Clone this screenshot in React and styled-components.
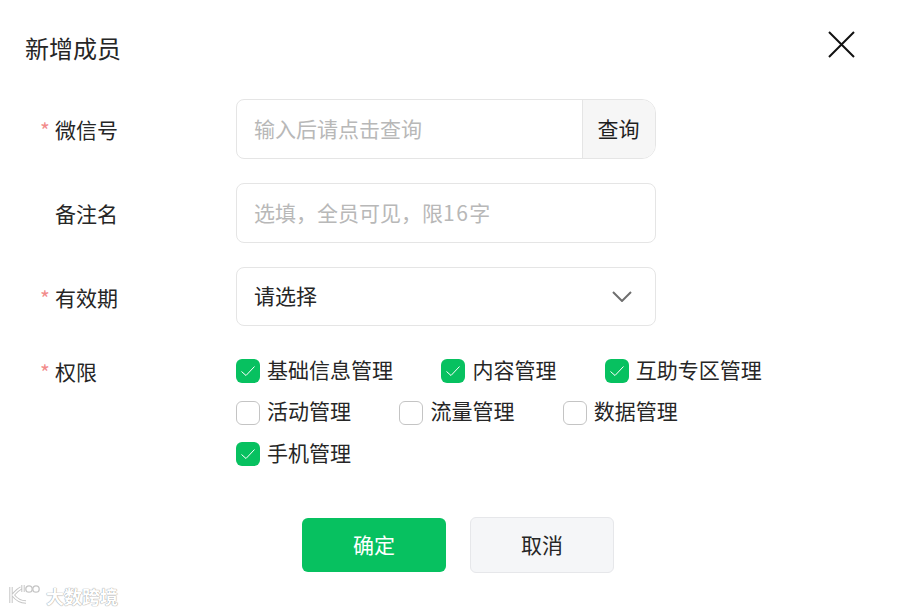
import { useState } from "react";
import styled, { createGlobalStyle } from "styled-components";

const GlobalStyle = createGlobalStyle`
  html, body {
    margin: 0;
    padding: 0;
    background: #fff;
  }
  body {
    font-family: "Noto Sans CJK SC", "Noto Sans", sans-serif;
    color: #262626;
  }
`;

const permissions = [
  [
    { name: "基础信息管理", checked: true },
    { name: "内容管理", checked: true },
    { name: "互助专区管理", checked: true },
  ],
  [
    { name: "活动管理", checked: false },
    { name: "流量管理", checked: false },
    { name: "数据管理", checked: false },
  ],
  [{ name: "手机管理", checked: true }],
];

const LOGO_STROKES = "M5 4V20M15 5C11 7 9 10 7 12C10 16 14 19 20 19M17 2V9";

function CheckItem({ name, checked }) {
  return (
    <CheckLabel>
      <CheckBox $checked={checked}>
        {checked && (
          <svg width="16" height="16" viewBox="0 0 16 16" fill="none">
            <path d="M1.5 8.5L6 12.5L14.5 3.5" stroke="#fff" strokeWidth="1" />
          </svg>
        )}
      </CheckBox>
      <CheckText>{name}</CheckText>
    </CheckLabel>
  );
}

function App() {
  const [rows] = useState(permissions);

  return (
    <Page>
      <GlobalStyle />
      <Header>
        <Title>新增成员</Title>
        <CloseIcon width="27" height="27" viewBox="0 0 27 27" fill="none">
          <path d="M1 1L26 26M26 1L1 26" stroke="#111" strokeWidth="2" />
        </CloseIcon>
      </Header>

      <Form>
        <Row>
          <Label $required>微信号</Label>
          <Field $withAddon>
            <Placeholder>输入后请点击查询</Placeholder>
            <Addon>查询</Addon>
          </Field>
        </Row>
        <Row>
          <Label>备注名</Label>
          <Field>
            <Placeholder>
              <span>
                选填，全员可见，限<Digits>16</Digits>字
              </span>
            </Placeholder>
          </Field>
        </Row>
        <Row>
          <Label $required>有效期</Label>
          <SelectField>
            <SelectText>请选择</SelectText>
            <svg width="20" height="11" viewBox="0 0 20 11" fill="none">
              <path d="M1 1L10 10L19 1" stroke="#6f6f6f" strokeWidth="2" />
            </svg>
          </SelectField>
        </Row>
        <PermRow>
          <PermLabel $required>权限</PermLabel>
          <CheckGroup>
            {rows.map((row, i) => (
              <CheckRow key={i}>
                {row.map((item) => (
                  <CheckItem key={item.name} {...item} />
                ))}
              </CheckRow>
            ))}
          </CheckGroup>
        </PermRow>
      </Form>

      <Footer>
        <PrimaryButton>确定</PrimaryButton>
        <CancelButton>取消</CancelButton>
      </Footer>

      <Watermark>
        <svg width="38" height="26" viewBox="0 0 38 26" fill="none">
          <path d={LOGO_STROKES} stroke="#c6c6c6" strokeWidth="3.4" />
          <path d={LOGO_STROKES} stroke="#fff" strokeWidth="1.4" />
          <g stroke="#c6c6c6" strokeWidth="1.3" fill="#fff">
            <circle cx="23" cy="6" r="3.2" />
            <circle cx="30" cy="6" r="3.2" />
          </g>
        </svg>
        <WatermarkText>大数跨境</WatermarkText>
      </Watermark>
    </Page>
  );
}

const Page = styled.div`
  position: relative;
  width: 900px;
  height: 613px;
  overflow: hidden;
  background: #fff;
  box-sizing: border-box;
  padding: 31px 45px 0 25px;
`;

const Header = styled.div`
  display: flex;
  justify-content: space-between;
  align-items: flex-start;
  height: 68px;
`;

const Title = styled.div`
  font-size: 24px;
  line-height: 36px;
  margin-top: -1px;
  color: #262626;
`;

const CloseIcon = styled.svg`
  display: block;
`;

const Form = styled.div`
  display: flex;
  flex-direction: column;
  gap: 24px;
`;

const Row = styled.div`
  display: flex;
  align-items: center;
`;

const PermRow = styled.div`
  display: flex;
  align-items: flex-start;
  margin-top: 9px;
`;

const Label = styled.div`
  position: relative;
  width: 211px;
  box-sizing: border-box;
  padding-left: 30px;
  font-size: 21px;
  line-height: 30px;
  color: #262626;
  ${({ $required }) =>
    $required &&
    `
    &::before {
      content: "*";
      position: absolute;
      left: 15px;
      top: 1px;
      color: #f28b8b;
      font-size: 21px;
    }
  `}
`;

const PermLabel = styled(Label)`
  margin-top: -3px;
`;

const Field = styled.div`
  display: flex;
  width: 420px;
  height: 60px;
  box-sizing: border-box;
  border: 1px solid #e5e5e5;
  border-radius: ${({ $withAddon }) => ($withAddon ? "8px 14px 14px 8px" : "8px")};
  overflow: hidden;
`;

const Placeholder = styled.div`
  flex: 1;
  display: flex;
  align-items: center;
  padding: 0 0 3px 17px;
  font-size: 21px;
  color: #b8b8b8;
`;

const Digits = styled.span`
  letter-spacing: 1.5px;
`;

const Addon = styled.div`
  display: flex;
  align-items: center;
  justify-content: center;
  box-sizing: border-box;
  width: 73px;
  padding: 0 1px 3px 0;
  border-left: 1px solid #e5e5e5;
  background: #f6f6f6;
  font-size: 21px;
  color: #1f1f1f;
`;

const SelectField = styled.div`
  display: flex;
  align-items: center;
  justify-content: space-between;
  width: 420px;
  height: 59px;
  box-sizing: border-box;
  border: 1px solid #e5e5e5;
  border-radius: 8px;
  padding: 0 23px 0 17px;
`;

const SelectText = styled.div`
  font-size: 21px;
  margin-top: -3px;
  color: #262626;
`;

const CheckGroup = styled.div`
  display: flex;
  flex-direction: column;
  gap: 17.5px;
`;

const CheckRow = styled.div`
  display: flex;
  gap: 48.4px;
`;

const CheckLabel = styled.label`
  display: flex;
  align-items: center;
  gap: 7px;
  height: 24px;
`;

const CheckText = styled.span`
  font-size: 21px;
  margin-top: -5px;
  color: #262626;
`;

const CheckBox = styled.span`
  display: flex;
  align-items: center;
  justify-content: center;
  width: 24px;
  height: 24px;
  box-sizing: border-box;
  border-radius: 6px;
  background: ${({ $checked }) => ($checked ? "#07c160" : "#fff")};
  border: ${({ $checked }) => ($checked ? "none" : "1px solid #c4c4c4")};
`;

const Footer = styled.div`
  display: flex;
  justify-content: center;
  align-items: center;
  gap: 24px;
  width: 866px;
  margin-top: 51px;
`;

const PrimaryButton = styled.button`
  width: 144px;
  height: 54px;
  padding: 0 0 3px;
  border: none;
  border-radius: 6px;
  background: #07c160;
  color: #fff;
  font-family: inherit;
  font-size: 21px;
`;

const CancelButton = styled.button`
  width: 144px;
  height: 56px;
  padding: 0 0 3px;
  border: 1px solid #e6e7ea;
  border-radius: 6px;
  background: #f5f6f8;
  color: #262626;
  font-family: inherit;
  font-size: 21px;
`;

const Watermark = styled.div`
  position: absolute;
  left: 6px;
  bottom: 4px;
  display: flex;
  align-items: center;
`;

const WatermarkText = styled.span`
  margin-left: 2px;
  font-size: 18px;
  font-weight: 700;
  color: #fff;
  text-shadow: 0 0 1px #9a9a9a, 0 0 1px #9a9a9a;
`;

export default App;
